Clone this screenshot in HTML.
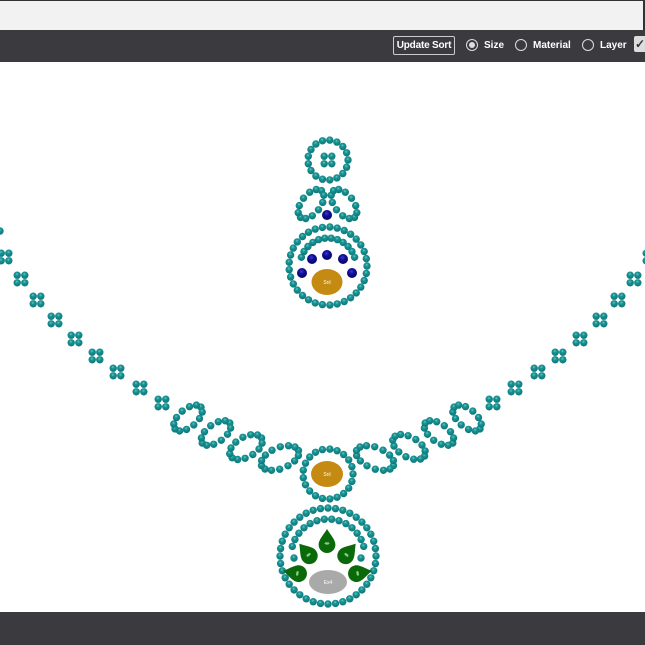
<!DOCTYPE html>
<html><head><meta charset="utf-8"><style>
html,body{margin:0;padding:0;width:645px;height:645px;overflow:hidden;background:#fff;font-family:"Liberation Sans",sans-serif}
#top{position:absolute;left:0;top:0;width:643px;height:30px;background:#f2f2f2;border-top:1px solid #333;box-sizing:border-box}
#rline{position:absolute;left:643px;top:0;width:2px;height:30px;background:#333}
#bar{position:absolute;left:0;top:30px;width:645px;height:32px;background:#3b3a3f;color:#fff;font-size:11px;font-weight:bold}
#bot{position:absolute;left:0;top:612px;width:645px;height:33px;background:#3b3a3f}
.btn{position:absolute;left:393px;top:6px;width:60px;height:17px;border:1px solid #ccc;border-radius:2px;line-height:17px;text-align:center;font-size:10px;white-space:nowrap;letter-spacing:-0.2px}
.rad{position:absolute;top:9px;width:12px;height:12px;border:1px solid #ddd;border-radius:50%;box-sizing:border-box}
.rad.on::after{content:"";position:absolute;left:2px;top:2px;width:6px;height:6px;border-radius:50%;background:#ddd}
.lb{position:absolute;top:10px;font-size:10px;white-space:nowrap}
.chk{position:absolute;left:634px;top:6px;width:14px;height:16px;background:#ddd;border-radius:2px;color:#333;font-size:12px;line-height:16px;padding-left:1px}
svg{position:absolute;left:0;top:0}
</style></head><body>
<div id="top"></div><div id="rline"></div>
<div id="bar">
<div class="btn">Update Sort</div>
<div class="rad on" style="left:466px"></div><div class="lb" style="left:484px">Size</div>
<div class="rad" style="left:515px"></div><div class="lb" style="left:533px">Material</div>
<div class="rad" style="left:582px"></div><div class="lb" style="left:600px">Layer</div>
<div class="chk">✓</div>
</div>
<div id="bot"></div>
<svg id="s" width="645" height="645" viewBox="0 0 645 645">
<defs>
<radialGradient id="t" cx="45%" cy="35%" r="70%"><stop offset="0" stop-color="#6cc8c8"/><stop offset="0.3" stop-color="#189494"/><stop offset="1" stop-color="#0c7274"/></radialGradient>
<radialGradient id="b" cx="45%" cy="35%" r="65%"><stop offset="0" stop-color="#3a3ad0"/><stop offset="0.4" stop-color="#10109a"/><stop offset="1" stop-color="#050560"/></radialGradient>
</defs>
<g id="g"></g>
<ellipse cx="327" cy="282" rx="15.5" ry="13" fill="#c48a12"/>
<text x="327" y="284" font-size="5" fill="#fff" text-anchor="middle" font-family="Liberation Sans">Snl</text>
<ellipse cx="327" cy="474" rx="16" ry="13" fill="#c48a12"/>
<text x="327" y="476" font-size="5" fill="#fff" text-anchor="middle" font-family="Liberation Sans">Snl</text>
<ellipse cx="328" cy="582" rx="19" ry="12" fill="#a9a9a9"/>
<text x="328" y="584" font-size="5" fill="#fff" text-anchor="middle" font-family="Liberation Sans">Ex4</text>
<g id="gr"></g>
</svg>
<script>
var g=document.getElementById('g'),gr=document.getElementById('gr'),h='';
function bead(x,y,r,f){h+='<circle cx="'+x.toFixed(1)+'" cy="'+y.toFixed(1)+'" r="'+(r||3.7)+'" fill="url(#'+(f||'t')+')"/>';}
function ring(cx,cy,r,n,a0,a1){a0=a0||0;a1=(a1===undefined)?360:a1;var full=(a1-a0)>=360;for(var i=0;i<n;i++){var a=(a0+(a1-a0)*i/(full?n:n-1))*Math.PI/180;bead(cx+r*Math.cos(a),cy+r*Math.sin(a));}}
function ell(cx,cy,rx,ry,rot,n){var c=Math.cos(rot*Math.PI/180),s=Math.sin(rot*Math.PI/180);for(var i=0;i<n;i++){var a=2*Math.PI*i/n,x=rx*Math.cos(a),y=ry*Math.sin(a);bead(cx+x*c-y*s,cy+x*s+y*c);}}
function cl(x,y){bead(x-3.8,y-3.8);bead(x+3.8,y-3.8);bead(x-3.8,y+3.8);bead(x+3.8,y+3.8);}
var M=655;
ring(328,160,20,17);cl(328,160);
ell(311,204,17,9.5,128,12);ell(M-311,204,17,9.5,52,12);
bead(327,215,5,'b');
ring(328,266,39,33);ring(328,266,28,12,-162,-18);
[[312,259],[327,255],[343,259],[302,273],[352,273]].forEach(function(p){bead(p[0],p[1],5,'b');});
var C=[[0,231],[5,257],[21,279],[37,300],[55,320],[75,339],[96,356],[117,372],[140,388],[162,403]];
C.forEach(function(p,i){if(i==0){bead(p[0],p[1]);bead(M-p[0],p[1]);}else{cl(p[0],p[1]);cl(M-p[0],p[1]);}});
var L=[[188,418,17,9,-40,12],[216,433,17,9,-36,12],[246,447,18,10,-30,13],[280,458,20,10.5,-22,14]];
L.forEach(function(p){ell(p[0],p[1],p[2],p[3],p[4],p[5]);ell(M-p[0],p[1],p[2],p[3],-p[4],p[5]);});
ring(328,474,25,21);
ring(328,556,48,40);ring(328,556,37,14,-165,-15);
bead(294,558);bead(361,558);
g.innerHTML=h;
function drop(x,y,rot){return '<g transform="translate('+x+','+y+') rotate('+rot+') scale(1.2)"><path d="M0,-10 C3,-5 7,-1 7,3 A7,7 0 0 1 -7,3 C-7,-1 -3,-5 0,-10Z" fill="#0a6a0a"/><ellipse cx="0" cy="2" rx="2" ry="1" fill="#8c8"/></g>';}
gr.innerHTML=drop(327,541,0)+drop(307,553,-40)+drop(348,553,40)+drop(295,573,-80)+drop(360,573,80);
</script>
</body></html>
